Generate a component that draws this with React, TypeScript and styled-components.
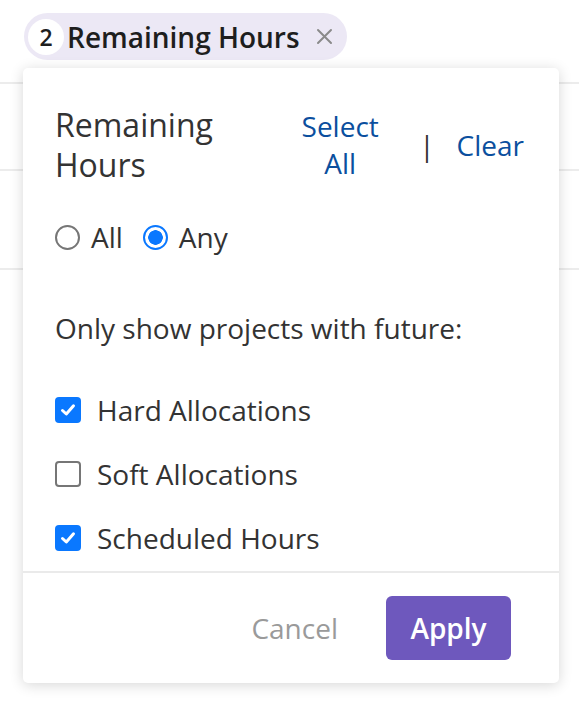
import styled, { createGlobalStyle } from "styled-components";

const GlobalStyle = createGlobalStyle`
  html, body {
    margin: 0;
    padding: 0;
    background: #ffffff;
  }
  body {
    font-family: "Open Sans", "Noto Sans", Arial, sans-serif;
    color: #333333;
  }
`;

const options = [
  { label: "Hard Allocations", checked: true },
  { label: "Soft Allocations", checked: false },
  { label: "Scheduled Hours", checked: true },
];

const App = () => {
  return (
    <Page>
      <GlobalStyle />
      <FilterBar>
        <Chip>
          <Badge>2</Badge>
          <ChipLabel>Remaining Hours</ChipLabel>
          <ChipClose>
            <svg width="17" height="17" viewBox="0 0 17 17">
              <path d="M2 2 L15 15 M15 2 L2 15" stroke="#8a8a8a" strokeWidth="2" strokeLinecap="round" />
            </svg>
          </ChipClose>
        </Chip>
      </FilterBar>

      <Row height={87} />
      <Row height={99} />

      <Popup>
        <Header>
          <Title>Remaining Hours</Title>
          <LinkButton width={80}>Select All</LinkButton>
          <Divider>|</Divider>
          <LinkButton>Clear</LinkButton>
        </Header>

        <RadioRow>
          <RadioItem>
            <Radio />
            All
          </RadioItem>
          <RadioItem>
            <Radio selected />
            Any
          </RadioItem>
        </RadioRow>

        <Note>Only show projects with future:</Note>

        <CheckList>
          {options.map((o) => (
            <CheckItem key={o.label}>
              <Box checked={o.checked}>
                {o.checked && (
                  <svg width="18" height="18" viewBox="0 0 18 18">
                    <path d="M3.5 9.5 L7.3 13 L14.5 4.8" fill="none" stroke="#fff" strokeWidth="3" strokeLinecap="round" strokeLinejoin="round" />
                  </svg>
                )}
              </Box>
              {o.label}
            </CheckItem>
          ))}
        </CheckList>

        <Footer>
          <CancelButton>Cancel</CancelButton>
          <ApplyButton>Apply</ApplyButton>
        </Footer>
      </Popup>
    </Page>
  );
};

export default App;

const Page = styled.div`
  position: relative;
  width: 579px;
  height: 706px;
  overflow: hidden;
  background: #fff;
`;

const FilterBar = styled.div`
  height: 84px;
  border-bottom: 2px solid #ececec;
  padding: 13px 24px 0;
  box-sizing: border-box;
`;

const Row = styled.div<{ height: number }>`
  height: ${(p) => p.height}px;
  border-bottom: 2px solid #ececec;
  box-sizing: border-box;
`;

const Chip = styled.div`
  display: inline-flex;
  align-items: center;
  height: 47px;
  padding: 0 14px 0 4px;
  border-radius: 24px;
  background: #ece8f5;
  box-sizing: border-box;
`;

const Badge = styled.div`
  width: 36px;
  height: 36px;
  border-radius: 50%;
  background: #fff;
  display: flex;
  align-items: center;
  justify-content: center;
  font-size: 23px;
  font-weight: 600;
  color: #1e1e1e;
`;

const ChipLabel = styled.span`
  margin-left: 3px;
  font-size: 28px;
  font-weight: 600;
  color: #1e1e1e;
`;

const ChipClose = styled.span`
  display: flex;
  margin-left: 16px;
`;

const Popup = styled.div`
  position: absolute;
  left: 23px;
  top: 68px;
  width: 536px;
  height: 615px;
  background: #fff;
  border-radius: 5px;
  box-shadow: 0 2px 14px rgba(0, 0, 0, 0.16);
  display: flex;
  flex-direction: column;
  box-sizing: border-box;
`;

const Header = styled.div`
  display: flex;
  align-items: center;
  padding: 37px 35px 0 32px;
`;

const Title = styled.div`
  flex: 1;
  min-width: 0;
  font-size: 32px;
  line-height: 40px;
  color: #333;
`;

const LinkButton = styled.div<{ width?: number }>`
  flex: none;
  width: ${(p) => (p.width ? `${p.width}px` : "auto")};
  text-align: center;
  font-size: 28px;
  line-height: 37px;
  color: #0b4f9e;
  cursor: pointer;
`;

const Divider = styled.span`
  flex: none;
  margin: 0 22px 0 39px;
  font-size: 28px;
  color: #333;
`;

const RadioRow = styled.div`
  display: flex;
  align-items: center;
  gap: 20px;
  padding: 33px 32px 0;
`;

const RadioItem = styled.label`
  display: flex;
  align-items: center;
  gap: 11px;
  font-size: 28px;
  line-height: 38px;
  color: #333;
`;

const Radio = styled.span<{ selected?: boolean }>`
  width: 25px;
  height: 25px;
  border-radius: 50%;
  box-sizing: border-box;
  border: 2px solid ${(p) => (p.selected ? "#0a78ff" : "#767676")};
  background: ${(p) => (p.selected ? "radial-gradient(circle, #0a78ff 0 7px, #fff 7.5px)" : "#fff")};
`;

const Note = styled.div`
  padding: 53px 32px 0;
  font-size: 28px;
  line-height: 38px;
  color: #333;
`;

const CheckList = styled.div`
  display: flex;
  flex-direction: column;
  gap: 26px;
  padding: 44px 32px 0;
`;

const CheckItem = styled.label`
  display: flex;
  align-items: center;
  gap: 16px;
  font-size: 28px;
  line-height: 38px;
  color: #333;
`;

const Box = styled.span<{ checked: boolean }>`
  width: 26px;
  height: 26px;
  border-radius: 4px;
  box-sizing: border-box;
  display: flex;
  align-items: center;
  justify-content: center;
  background: ${(p) => (p.checked ? "#0a78ff" : "#fff")};
  border: ${(p) => (p.checked ? "none" : "2px solid #767676")};
`;

const Footer = styled.div`
  margin-top: auto;
  height: 112px;
  border-top: 2px solid #eaeaea;
  display: flex;
  align-items: center;
  justify-content: flex-end;
  gap: 48px;
  padding: 0 48px 0 32px;
  box-sizing: border-box;
`;

const CancelButton = styled.div`
  font-size: 28px;
  color: #9a9a9a;
  cursor: pointer;
`;

const ApplyButton = styled.button`
  width: 125px;
  height: 64px;
  border: none;
  border-radius: 6px;
  background: #6e58bd;
  color: #fff;
  font-family: "Open Sans", "Noto Sans", Arial, sans-serif;
  font-size: 28px;
  font-weight: 600;
  cursor: pointer;
`;
